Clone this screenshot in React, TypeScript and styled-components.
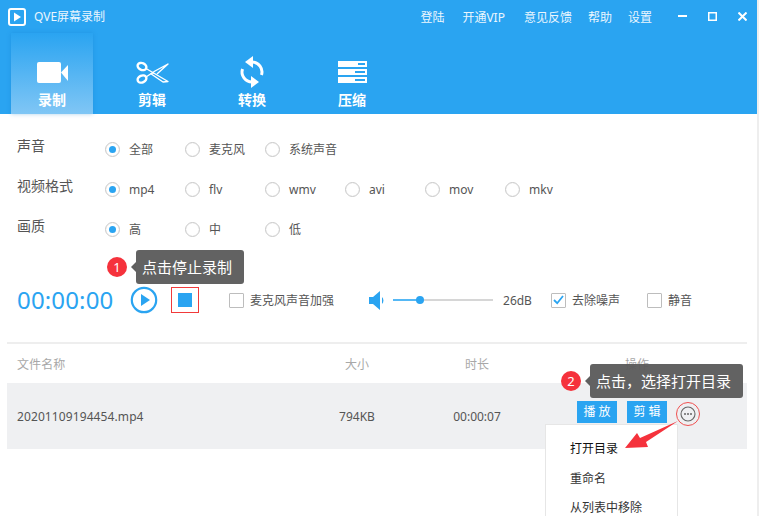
import React from "react";
import styled, { createGlobalStyle } from "styled-components";

const Global = createGlobalStyle`
  html, body { margin: 0; padding: 0; background: #fff; }
  body { font-family: "Noto Sans", "Noto Sans CJK SC", sans-serif; }
  * { box-sizing: border-box; }
`;

const Page = styled.div`
  position: relative;
  width: 759px;
  height: 516px;
  overflow: hidden;
  background: #fff;
  color: #555;
  font-size: 12px;
  border-right: 2px solid #eee;
`;
const Header = styled.header`
  height: 114px;
  background: #2aa4f1;
  color: #fff;
`;
const TitleBar = styled.div`
  height: 33px;
  display: flex;
  align-items: center;
  padding: 0 10px 0 8px;
`;
const Title = styled.div`
  margin-left: 8px;
  color: #eaf6fe;
  flex: 1;
  line-height: 17px;
`;
const TopMenu = styled.nav`
  display: flex;
  margin-right: 26px;
`;
const TopLink = styled.span<{ $gap: number }>`
  color: #eaf6fe;
  margin-left: ${(p) => p.$gap}px;
`;
const WinControls = styled.div`
  display: flex;
  gap: 21px;
`;
const Tabs = styled.nav`
  height: 81px;
  display: flex;
  padding-left: 2px;
`;
const Tab = styled.div`
  width: 100px;
  display: flex;
  justify-content: center;
`;
const TabInner = styled.div<{ $active?: boolean }>`
  width: 82px;
  height: 81px;
  padding-top: 23px;
  display: flex;
  flex-direction: column;
  align-items: center;
  font-size: 14px;
  font-weight: 700;
  color: #fff;
  ${(p) =>
    p.$active &&
    `background: linear-gradient(180deg, #2aa4f1 0%, #80c6f5 100%);
     box-shadow: 0 0 4px rgba(20, 120, 200, .35);`}
`;
const TabIcon = styled.div`
  height: 32px;
  display: flex;
  align-items: center;
  justify-content: center;
`;
const TabLabel = styled.div`
  margin-top: 2px;
  line-height: 20px;
`;
const Form = styled.section`
  padding: 21px 0 0 17px;
`;
const FormRow = styled.div`
  height: 40px;
  display: flex;
  align-items: flex-start;
`;
const RowLabel = styled.div`
  width: 88px;
  padding-top: 1px;
  font-size: 14px;
  line-height: 20px;
  color: #555;
`;
const RadioItem = styled.div`
  width: 80px;
  display: flex;
  align-items: center;
  height: 20px;
  margin-top: 4px;
  color: #555;
`;
const RadioDot = styled.span<{ $on?: boolean }>`
  width: 15px;
  height: 15px;
  border-radius: 50%;
  border: 1px solid #c9c9c9;
  background: #fff;
  margin-right: 9px;
  display: flex;
  align-items: center;
  justify-content: center;
  box-shadow: inset 0 0 1px #ddd;
  &::after {
    content: "";
    width: 7px;
    height: 7px;
    border-radius: 50%;
    background: ${(p) => (p.$on ? "#2aa4f1" : "transparent")};
  }
`;
const RecordBar = styled.div`
  height: 40px;
  margin-top: 25px;
  padding-left: 17px;
  display: flex;
  align-items: center;
`;
const Clock = styled.div`
  width: 113px;
  font-size: 24px;
  letter-spacing: 0.15px;
  color: #2aa4f1;
  line-height: 30px;
`;
const StopFrame = styled.div`
  width: 28px;
  height: 26px;
  border: 1px solid #f13a3a;
  margin-left: 13px;
  display: flex;
  align-items: center;
  justify-content: center;
`;
const StopSquare = styled.span`
  width: 14px;
  height: 14px;
  background: #2aa4f1;
`;
const CheckItem = styled.div<{ $ml: number }>`
  display: flex;
  align-items: center;
  margin-left: ${(p) => p.$ml}px;
  color: #555;
`;
const CheckBox = styled.span`
  width: 15px;
  height: 15px;
  border: 1px solid #bdbdbd;
  border-radius: 1px;
  background: #fff;
  margin-right: 6px;
  display: flex;
  align-items: center;
  justify-content: center;
`;
const SpeakerWrap = styled.div`
  margin-left: 35px;
  display: flex;
  align-items: center;
`;
const Slider = styled.div`
  position: relative;
  width: 100px;
  height: 2px;
  margin-left: 7px;
  background: #d6d6d6;
`;
const SliderFill = styled.div`
  height: 2px;
  background: #55b8f5;
`;
const SliderThumb = styled.span`
  position: absolute;
  top: -3px;
  width: 8px;
  height: 8px;
  border-radius: 50%;
  background: #2aa4f1;
`;
const Db = styled.div`
  width: 48px;
  margin-left: 10px;
  color: #555;
`;
const Tip = styled.div<{ $left: number; $top: number; $w: number }>`
  position: absolute;
  left: ${(p) => p.$left}px;
  top: ${(p) => p.$top}px;
  width: ${(p) => p.$w}px;
  height: 34px;
  background: rgba(90, 90, 90, 0.95);
  border-radius: 3px;
  color: #fff;
  font-size: 15px;
  line-height: 34px;
  padding-left: 6px;
  white-space: nowrap;
  &::before {
    content: "";
    position: absolute;
    left: -5px;
    top: 12px;
    border: 5px solid transparent;
    border-left: 0;
    border-right-color: #5f5f5f;
  }
`;
const Badge = styled.div<{ $left: number; $top: number }>`
  position: absolute;
  left: ${(p) => p.$left}px;
  top: ${(p) => p.$top}px;
  width: 20px;
  height: 20px;
  border-radius: 50%;
  background: #f5323c;
  color: #fff;
  font-size: 13px;
  line-height: 20px;
  text-align: center;
`;
const Table = styled.section`
  margin: 22px 10px 0 7px;
  border-top: 2px solid #eeeeee;
`;
const Cols = styled.div`
  display: grid;
  grid-template-columns: 310px 80px 160px 1fr;
  align-items: center;
`;
const Head = styled(Cols)`
  height: 39px;
  color: #a8a8a8;
`;
const Row = styled(Cols)`
  height: 66px;
  background: #eff0f2;
  color: #555;
`;
const Name = styled.div`
  padding-left: 10px;
  letter-spacing: 0.1px;
`;
const Center = styled.div`
  text-align: center;
`;
const OpHead = styled.div`
  padding-left: 68px;
`;
const Ops = styled.div`
  display: flex;
  align-items: center;
  padding: 0 0 8px 20px;
`;
const OpButton = styled.div`
  width: 40px;
  height: 22px;
  margin-right: 10px;
  background: #2aa4f1;
  color: #fff;
  text-align: center;
  line-height: 22px;
  letter-spacing: 3px;
  text-indent: 3px;
`;
const MoreRing = styled.div`
  width: 24px;
  height: 24px;
  margin: 4px 0 0 -1px;
  border: 1px solid #f05050;
  border-radius: 50%;
  display: flex;
  align-items: center;
  justify-content: center;
`;
const Menu = styled.div`
  position: absolute;
  left: 545px;
  top: 424px;
  width: 133px;
  height: 100px;
  background: #fff;
  border: 1px solid #e6e6e6;
  padding-top: 9px;
  color: #333;
`;
const MenuItem = styled.div<{ $strong?: boolean }>`
  height: 29.5px;
  line-height: 29.5px;
  padding-left: 24px;
  white-space: nowrap;
  color: ${(p) => (p.$strong ? "#111" : "#333")};
`;
const ArrowSvg = styled.svg`
  position: absolute;
  left: 620px;
  top: 420px;
`;

const Logo = () => (
  <svg width="18" height="18" viewBox="0 0 18 18">
    <rect x="1" y="1" width="16" height="16" rx="2" fill="none" stroke="#fff" strokeWidth="2" />
    <path d="M6 4.5 L13 9 L6 13.5 Z" fill="#fff" />
  </svg>
);

const Camera = () => (
  <svg width="31" height="21" viewBox="0 0 31 21">
    <rect x="0" y="0" width="24" height="21" rx="2" fill="#fff" />
    <path d="M24 10.5 L31 3 V19 Z" fill="#fff" />
  </svg>
);

const ScissorsIcon = () => (
  <svg width="33" height="23" viewBox="0 0 33 23" fill="none" stroke="#fff">
    <ellipse cx="6" cy="5.5" rx="4.5" ry="3.4" strokeWidth="2.4" transform="rotate(25 6 5.5)" />
    <ellipse cx="6" cy="18" rx="4.5" ry="3.4" strokeWidth="2.4" transform="rotate(-25 6 18)" />
    <path d="M10 7.5 L32 20.5 L27 21 L14.5 12.5" strokeWidth="1.4" strokeLinejoin="round" />
    <path d="M10 16 L19 10 L32 3 L21 13" strokeWidth="1.4" strokeLinejoin="round" />
    <circle cx="17" cy="12" r="1" fill="#fff" stroke="none" />
  </svg>
);

const SyncIcon = () => (
  <svg width="26" height="32" viewBox="0 0 26 32" fill="none">
    <path d="M13 6 A10 10 0 0 1 22.5 19" stroke="#fff" strokeWidth="3" />
    <path d="M13 26 A10 10 0 0 1 3.5 13" stroke="#fff" strokeWidth="3" />
    <path d="M14 0 L14 12 L6 6 Z" fill="#fff" />
    <path d="M12 20 L12 32 L20 26 Z" fill="#fff" />
  </svg>
);

const CompressIcon = () => (
  <svg width="29" height="22" viewBox="0 0 29 22">
    <path
      fillRule="evenodd"
      fill="#fff"
      d="M0 0H29V6H0Z M20 2V4H27V2Z M0 8H29V14H0Z M17 10V12H27V10Z M0 16H29V22H0Z M17 18V20H27V18Z"
    />
  </svg>
);

const Minimize = () => (
  <svg width="9" height="9" viewBox="0 0 9 9"><rect x="0" y="3" width="9" height="2" fill="#fff" /></svg>
);
const Maximize = () => (
  <svg width="9" height="9" viewBox="0 0 9 9"><rect x="0.75" y="0.75" width="7.5" height="7.5" fill="none" stroke="#fff" strokeWidth="1.5" /></svg>
);
const Close = () => (
  <svg width="9" height="9" viewBox="0 0 9 9"><path d="M0.5 0.5 L8.5 8.5 M8.5 0.5 L0.5 8.5" stroke="#fff" strokeWidth="2" /></svg>
);

const PlayRing = () => (
  <svg width="28" height="28" viewBox="0 0 28 28" style={{ flex: "none" }}>
    <circle cx="14" cy="14" r="12.2" fill="none" stroke="#2aa4f1" strokeWidth="2.2" />
    <path d="M11 8 L20 14 L11 20 Z" fill="#2aa4f1" />
  </svg>
);

const Speaker = () => (
  <svg width="17" height="19" viewBox="0 0 17 19" style={{ flex: "none" }}>
    <path d="M0 6 H4 L11 0 V19 L4 13 H0 Z" fill="#2aa4f1" />
    <path d="M13 6 A5 5 0 0 1 13 13 Z" fill="#2aa4f1" />
  </svg>
);

const Tick = () => (
  <svg width="11" height="10" viewBox="0 0 11 10"><path d="M1 5 L4.2 8.2 L10 1" fill="none" stroke="#2aa4f1" strokeWidth="1.8" /></svg>
);

const MoreDots = () => (
  <svg width="16" height="16" viewBox="0 0 16 16">
    <circle cx="8" cy="8" r="7" fill="none" stroke="#666" strokeWidth="1.1" />
    <circle cx="5" cy="8" r="1" fill="#666" />
    <circle cx="8" cy="8" r="1" fill="#666" />
    <circle cx="11" cy="8" r="1" fill="#666" />
  </svg>
);

const Radios = ({ items }: { items: string[] }) => (
  <>
    {items.map((t, i) => (
      <RadioItem key={t}>
        <RadioDot $on={i === 0} />
        {t}
      </RadioItem>
    ))}
  </>
);

const topLinks: [string, number][] = [
  ["登陆", 0],
  ["开通VIP", 18],
  ["意见反馈", 19],
  ["帮助", 16],
  ["设置", 16],
];

export default function App() {
  return (
    <Page>
      <Global />
      <Header>
        <TitleBar>
          <Logo />
          <Title>QVE屏幕录制</Title>
          <TopMenu>
            {topLinks.map(([t, g]) => (
              <TopLink key={t} $gap={g}>{t}</TopLink>
            ))}
          </TopMenu>
          <WinControls>
            <Minimize />
            <Maximize />
            <Close />
          </WinControls>
        </TitleBar>
        <Tabs>
          <Tab><TabInner $active><TabIcon><Camera /></TabIcon><TabLabel>录制</TabLabel></TabInner></Tab>
          <Tab><TabInner><TabIcon><ScissorsIcon /></TabIcon><TabLabel>剪辑</TabLabel></TabInner></Tab>
          <Tab><TabInner><TabIcon><SyncIcon /></TabIcon><TabLabel>转换</TabLabel></TabInner></Tab>
          <Tab><TabInner><TabIcon><CompressIcon /></TabIcon><TabLabel>压缩</TabLabel></TabInner></Tab>
        </Tabs>
      </Header>
      <Form>
        <FormRow><RowLabel>声音</RowLabel><Radios items={["全部", "麦克风", "系统声音"]} /></FormRow>
        <FormRow><RowLabel>视频格式</RowLabel><Radios items={["mp4", "flv", "wmv", "avi", "mov", "mkv"]} /></FormRow>
        <FormRow><RowLabel>画质</RowLabel><Radios items={["高", "中", "低"]} /></FormRow>
      </Form>
      <RecordBar>
        <Clock>00:00:00</Clock>
        <PlayRing />
        <StopFrame><StopSquare /></StopFrame>
        <CheckItem $ml={30}><CheckBox />麦克风声音加强</CheckItem>
        <SpeakerWrap><Speaker /></SpeakerWrap>
        <Slider>
          <SliderFill style={{ width: "27%" }} />
          <SliderThumb style={{ left: "23%" }} />
        </Slider>
        <Db>26dB</Db>
        <CheckItem $ml={0}><CheckBox><Tick /></CheckBox>去除噪声</CheckItem>
        <CheckItem $ml={27}><CheckBox />静音</CheckItem>
      </RecordBar>
      <Table>
        <Head>
          <Name>文件名称</Name>
          <Center>大小</Center>
          <Center>时长</Center>
          <OpHead>操作</OpHead>
        </Head>
        <Row>
          <Name>20201109194454.mp4</Name>
          <Center>794KB</Center>
          <Center>00:00:07</Center>
          <Ops>
            <OpButton>播放</OpButton>
            <OpButton>剪辑</OpButton>
            <MoreRing><MoreDots /></MoreRing>
          </Ops>
        </Row>
      </Table>
      <Badge $left={107} $top={257}>1</Badge>
      <Tip $left={136} $top={250} $w={108}>点击停止录制</Tip>
      <Badge $left={561} $top={371}>2</Badge>
      <Tip $left={590} $top={364} $w={153}>点击，选择打开目录</Tip>
      <Menu>
        <MenuItem $strong>打开目录</MenuItem>
        <MenuItem>重命名</MenuItem>
        <MenuItem>从列表中移除</MenuItem>
      </Menu>
      <ArrowSvg width="60" height="32" viewBox="0 0 60 32">
        <path d="M58 1 L26 22 L28 27 L5 28 L17 13 L20 18 Z" fill="#f5323c" />
      </ArrowSvg>
    </Page>
  );
}
